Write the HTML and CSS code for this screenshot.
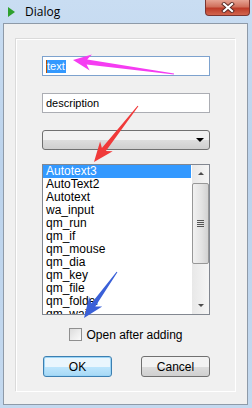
FILE: index.html
```html
<!DOCTYPE html>
<html lang="en">
<head>
    <meta charset="UTF-8">
    <title>Dialog</title>
    <link rel="stylesheet" href="styles.css">
</head>
<body>
    <div class="window">
        <!-- タイトルバー -->
        <div class="titlebar">
            <svg class="app-icon" width="7" height="10" viewBox="0 0 7 10">
                <polygon points="0,0 7,5 0,10" fill="#2ea02e"/>
            </svg>
            <span class="title">Dialog</span>
            <div class="close">
                <svg width="14" height="11" viewBox="0 0 14 11">
                    <path d="M3 2 L11 9 M11 2 L3 9" stroke="#5a2a25" stroke-width="4" stroke-linecap="square"/>
                    <path d="M3 2 L11 9 M11 2 L3 9" stroke="#fff" stroke-width="2.2" stroke-linecap="square"/>
                </svg>
            </div>
        </div>

        <!-- クライアント領域 -->
        <div class="client">
            <div class="group">
                <div class="field focused"><span class="caret"></span><span class="selected-text">text</span></div>
                <div class="field">description</div>
                <div class="combo"><span class="combo-arrow"></span></div>
                <div class="listbox">
                    <div class="items">
                        <div class="item active">Autotext3</div>
                        <div class="item">AutoText2</div>
                        <div class="item">Autotext</div>
                        <div class="item">wa_input</div>
                        <div class="item">qm_run</div>
                        <div class="item">qm_if</div>
                        <div class="item">qm_mouse</div>
                        <div class="item">qm_dia</div>
                        <div class="item">qm_key</div>
                        <div class="item">qm_file</div>
                        <div class="item">qm_folder</div>
                        <div class="item">qm_wait</div>
                    </div>
                    <div class="scrollbar">
                        <div class="scroll-btn"><span class="arrow-up"></span></div>
                        <div class="thumb"><span class="grip"></span></div>
                        <div class="track"></div>
                        <div class="scroll-btn"><span class="arrow-down"></span></div>
                    </div>
                </div>
                <label class="check">
                    <span class="box"></span>
                    <span>Open after adding</span>
                </label>
                <div class="buttons">
                    <button class="btn default">OK</button>
                    <button class="btn">Cancel</button>
                </div>
            </div>
        </div>

        <!-- 注釈の矢印 -->
        <svg class="annotations" width="252" height="408" viewBox="0 0 252 408">
            <polygon fill="#f53cf2" points="73,60 91.9,54.6 87.2,59.4 174.1,73.5 173.9,74.5 86.6,64.4 89.7,70.4"/>
            <polygon fill="#f03a3a" points="94,162 100.1,141.4 101.9,147.9 137.6,105.7 138.4,106.3 105.9,150.9 112.7,151.2"/>
            <polygon fill="#3a60d8" points="84,318 89.2,297 91.3,303.5 116.6,271.7 117.4,272.3 95.3,306.5 102.2,306.4"/>
        </svg>
    </div>
</body>
</html>
```

FILE: styles.css
```css
/* 基本 */
body {
    margin: 0;
    padding: 0;
    font-family: "Liberation Sans", Arial, sans-serif;
    font-size: 11px;
    color: #000;
}

/* ウィンドウ枠 */
.window {
    position: relative;
    width: 252px;
    height: 408px;
    box-sizing: border-box;
    background: linear-gradient(to bottom, #c9ddf2, #bcd3ec 40%, #c4d9ef);
    display: flex;
    flex-direction: column;
}

.titlebar {
    height: 23px;
    display: flex;
    align-items: flex-start;
    position: relative;
}

.app-icon {
    margin: 7px 0 0 8px;
}

.title {
    margin: 3px 0 0 10px;
    font-family: "Open Sans", "Noto Sans", sans-serif;
    font-size: 12px;
    color: #000;
}

.close {
    position: absolute;
    right: 2px;
    top: 0;
    width: 45px;
    height: 16px;
    box-sizing: border-box;
    border: 1px solid #7b3530;
    border-top: none;
    border-radius: 0 0 4px 4px;
    background: linear-gradient(to bottom, #e6a393, #d0705c 45%, #bd3b28 55%, #d2664f);
    display: flex;
    justify-content: center;
    align-items: center;
}

/* クライアント領域 */
.client {
    flex: 1;
    margin: 0 4px 3px 3px;
    border: 1px solid #8e9aa8;
    background-color: #f0f0f0;
    display: flex;
}

.group {
    flex: 1;
    margin: 15px 11px 12px 12px;
    border: 1px solid #fff;
    box-shadow: -1px -1px 0 #dadada;
    padding: 16px 25px 0 25px;
    display: flex;
    flex-direction: column;
}

.field {
    height: 20px;
    box-sizing: border-box;
    border: 1px solid #abadb3;
    border-top-color: #abadb3;
    background-color: #fff;
    padding: 0 3px;
    line-height: 18px;
    margin-bottom: 17px;
    display: flex;
    align-items: center;
}

.field.focused {
    border-color: #7da2ce;
}

.caret {
    width: 1px;
    height: 13px;
    background-color: #c05000;
}

.selected-text {
    background-color: #3399ff;
    color: #fff;
    line-height: 13px;
    padding-right: 1px;
}

.combo {
    height: 20px;
    box-sizing: border-box;
    border: 1px solid #707070;
    border-radius: 3px;
    background: linear-gradient(to bottom, #f2f2f2 50%, #dddddd 50%, #cfcfcf);
    margin-bottom: 14px;
    display: flex;
    justify-content: flex-end;
    align-items: center;
    padding-right: 5px;
}

.combo-arrow {
    width: 0;
    height: 0;
    border-left: 4px solid transparent;
    border-right: 4px solid transparent;
    border-top: 4px solid #000;
}

/* リストボックス */
.listbox {
    height: 151px;
    box-sizing: border-box;
    border: 1px solid #828790;
    background-color: #fff;
    display: flex;
    overflow: hidden;
    margin-bottom: 13px;
}

.items {
    flex: 1;
    overflow: hidden;
    font-size: 12px;
}

.item {
    height: 13px;
    line-height: 13px;
    padding-left: 3px;
    white-space: nowrap;
}

.item.active {
    background-color: #3399ff;
    color: #fff;
}

.scrollbar {
    width: 17px;
    margin-left: 1px;
    display: flex;
    flex-direction: column;
    background: linear-gradient(to right, #e8e8e8, #f5f5f5);
}

.scroll-btn {
    height: 17px;
    display: flex;
    justify-content: center;
    align-items: center;
}

.arrow-up {
    border-left: 3px solid transparent;
    border-right: 3px solid transparent;
    border-bottom: 3px solid #4d4d4d;
}

.arrow-down {
    border-left: 3px solid transparent;
    border-right: 3px solid transparent;
    border-top: 3px solid #4d4d4d;
}

.thumb {
    height: 81px;
    margin: 1px 0 0 0;
    box-sizing: border-box;
    border: 1px solid #979797;
    border-radius: 2px;
    background: linear-gradient(to right, #f1f1f1, #e2e2e2 60%, #d2d2d2);
    display: flex;
    justify-content: center;
    align-items: center;
}

.grip {
    width: 7px;
    height: 7px;
    background: repeating-linear-gradient(to bottom, #555 0, #555 1px, transparent 1px, transparent 2px);
}

.track {
    flex: 1;
}

/* チェックボックス */
.check {
    display: flex;
    align-items: center;
    justify-content: center;
    gap: 4px;
    height: 13px;
    margin-bottom: 15px;
    font-size: 12px;
}

.box {
    width: 13px;
    height: 13px;
    box-sizing: border-box;
    border: 1px solid #8f8f8f;
    background: linear-gradient(135deg, #dcdcdc, #fbfbfb);
}

/* ボタン */
.buttons {
    display: flex;
    justify-content: space-between;
    padding-left: 1px;
}

.btn {
    width: 69px;
    height: 21px;
    border: 1px solid #707070;
    border-radius: 3px;
    background: linear-gradient(to bottom, #f2f2f2 50%, #dddddd 50%, #cfcfcf);
    font-family: "Liberation Sans", Arial, sans-serif;
    font-size: 12px;
    color: #000;
    padding: 0;
}

.btn.default {
    border-color: #3c7fb1;
    background: linear-gradient(to bottom, #eaf6fd 50%, #bee6fd 50%, #a7d9f5);
    box-shadow: inset 0 0 0 1px #9cd5f6;
}

/* 注釈 */
.annotations {
    position: absolute;
    left: 0;
    top: 0;
    pointer-events: none;
}
```
